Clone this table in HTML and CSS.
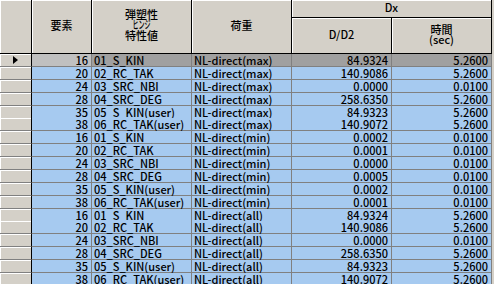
FILE: index.html
```html
<!DOCTYPE html>
<html lang="ja">
<head>
<meta charset="utf-8">
<link rel="stylesheet" href="styles.css">
</head>
<body>
<div class="grid">
  <div class="head">
    <div class="hc corner"></div>
    <div class="hc h-elem"><span>要素</span></div>
    <div class="hc h-hinge"><span class="lines"><span>弾塑性</span><span class="hw">ヒンジ</span><span>特性値</span></span></div>
    <div class="hc h-load"><span>荷重</span></div>
    <div class="hc h-dx"><span>Dx</span></div>
    <div class="hc h-d"><span>D/D2</span></div>
    <div class="hc h-t"><span class="lines"><span>時間</span><span>(sec)</span></span></div>
  </div>
  <div class="body" id="body"></div>
</div>
<script src="app.js"></script>
</body>
</html>
```
FILE: app.js
```js
const rows = [
  ["16","01_S_KIN","NL-direct(max)","84.9324","5.2600"],
  ["20","02_RC_TAK","NL-direct(max)","140.9086","5.2600"],
  ["24","03_SRC_NBI","NL-direct(max)","0.0000","0.0100"],
  ["28","04_SRC_DEG","NL-direct(max)","258.6350","5.2600"],
  ["35","05_S_KIN(user)","NL-direct(max)","84.9323","5.2600"],
  ["38","06_RC_TAK(user)","NL-direct(max)","140.9072","5.2600"],
  ["16","01_S_KIN","NL-direct(min)","0.0002","0.0100"],
  ["20","02_RC_TAK","NL-direct(min)","0.0001","0.0100"],
  ["24","03_SRC_NBI","NL-direct(min)","0.0000","0.0100"],
  ["28","04_SRC_DEG","NL-direct(min)","0.0005","0.0100"],
  ["35","05_S_KIN(user)","NL-direct(min)","0.0002","0.0100"],
  ["38","06_RC_TAK(user)","NL-direct(min)","0.0001","0.0100"],
  ["16","01_S_KIN","NL-direct(all)","84.9324","5.2600"],
  ["20","02_RC_TAK","NL-direct(all)","140.9086","5.2600"],
  ["24","03_SRC_NBI","NL-direct(all)","0.0000","0.0100"],
  ["28","04_SRC_DEG","NL-direct(all)","258.6350","5.2600"],
  ["35","05_S_KIN(user)","NL-direct(all)","84.9323","5.2600"],
  ["38","06_RC_TAK(user)","NL-direct(all)","140.9072","5.2600"]
];
const body = document.getElementById("body");
rows.forEach((r, i) => {
  const row = document.createElement("div");
  row.className = "row" + (i === 0 ? " sel" : "");
  const rh = document.createElement("div");
  rh.className = "c rh";
  if (i === 0) {
    const tri = document.createElement("span");
    tri.className = "tri";
    rh.appendChild(tri);
  }
  row.appendChild(rh);
  const cls = ["num n0", "txt", "txt", "num", "num"];
  r.forEach((v, j) => {
    const c = document.createElement("div");
    c.className = "c " + cls[j];
    c.textContent = v;
    row.appendChild(c);
  });
  body.appendChild(row);
});
```
FILE: styles.css
```css
html, body {
  margin: 0;
  padding: 0;
  background: #d4d0c8;
  overflow: hidden;
}
body {
  width: 494px;
  height: 284px;
  font-family: "Noto Sans CJK JP", "Noto Sans", sans-serif;
  font-size: 11px;
  font-weight: 500;
  color: #000;
}
.grid {
  width: 492px;
}
.head {
  display: grid;
  grid-template-columns: 32px 60px 100px 100px 100px 100px;
  grid-template-rows: 18px 36px;
}
.hc {
  box-sizing: border-box;
  background: #d4d0c8;
  border-right: 1px solid #000;
  border-bottom: 1px solid #000;
  box-shadow: inset 1px 1px 0 #fff;
  display: flex;
  align-items: center;
  justify-content: center;
  text-align: center;
  line-height: 11px;
  padding-bottom: 3px;
}
.lines {
  display: flex;
  flex-direction: column;
  align-items: center;
}
.lines > span {
  display: block;
  height: 10.5px;
  line-height: 10.5px;
}
.lines > .hw {
  transform: scaleX(0.55);
}
.corner { grid-column: 1; grid-row: 1 / 3; }
.h-elem { grid-column: 2; grid-row: 1 / 3; }
.h-hinge { grid-column: 3; grid-row: 1 / 3; padding-bottom: 4px; }
.h-load { grid-column: 4; grid-row: 1 / 3; }
.h-dx { grid-column: 5 / 7; grid-row: 1; padding-bottom: 2px; }
.h-d { grid-column: 5; grid-row: 2; }
.h-t { grid-column: 6; grid-row: 2; }
.row {
  display: grid;
  grid-template-columns: 32px 60px 100px 100px 100px 100px;
  height: 12.875px;
}
.c {
  box-sizing: border-box;
  background: #a6caf0;
  border-right: 1px solid #808080;
  border-bottom: 1px solid #808080;
  line-height: 12px;
  white-space: nowrap;
}
.num {
  text-align: right;
  padding-right: 3px;
}
.txt {
  text-align: left;
  padding-left: 2px;
}
.rh {
  background: #d4d0c8;
  border-right: 1px solid #000;
  box-shadow: inset 1px 1px 0 #fff;
  position: relative;
}
.tri {
  position: absolute;
  left: 13px;
  top: 2px;
  width: 0;
  height: 0;
  border-top: 4.5px solid transparent;
  border-bottom: 4.5px solid transparent;
  border-left: 5px solid #000;
}
.sel .c { background: #a0a0a0; }
.sel .n0 { background: #c0c0c0; }
.sel .rh { background: #d4d0c8; }
```
